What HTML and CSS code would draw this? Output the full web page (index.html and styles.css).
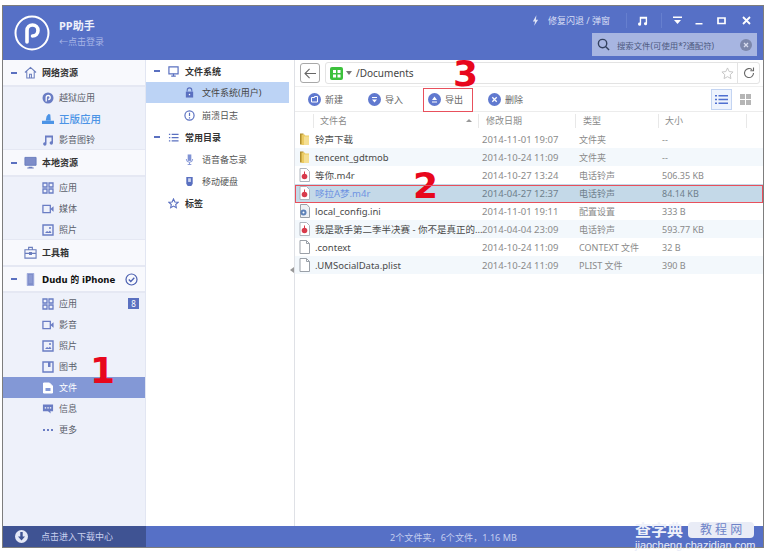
FILE: index.html
```html
<!DOCTYPE html>
<html lang="zh">
<head>
<meta charset="utf-8">
<title>PP助手</title>
<link rel="stylesheet" href="styles.css">
</head>
<body>
<svg class="defs" width="0" height="0" aria-hidden="true">
  <symbol id="apps" viewBox="0 0 12 12"><path d="M1 1h4v4H1zM7 1h4v4H7zM1 7h4v4H1zM7 7h4v4H7z" fill="none" stroke="currentColor" stroke-width="1.3"/></symbol>
  <symbol id="video" viewBox="0 0 13 12"><path d="M1 2h8v8H1z" fill="none" stroke="currentColor" stroke-width="1.4"/><path d="M9 6l3.500-3v6z" fill="currentColor"/></symbol>
  <symbol id="photo" viewBox="0 0 12 12"><path d="M1 1h10v10H1z" fill="none" stroke="currentColor" stroke-width="1.4"/><path d="M3 9l2-2 1.500 1L8 6.500 9.500 9z" fill="currentColor"/><circle cx="8" cy="4" r="1" fill="currentColor"/></symbol>
  <symbol id="book" viewBox="0 0 12 12"><path d="M1 1h10v10H1z" fill="none" stroke="currentColor" stroke-width="1.4"/><path d="M6 1h2.500v5H6z" fill="currentColor"/></symbol>
  <symbol id="doc" viewBox="0 0 12 12"><path d="M1.500 1h6l3 3v7h-9z" fill="#fff" stroke="#fff"/><path d="M3.500 6h5v3h-5z" fill="#8398d6"/></symbol>
  <symbol id="msg" viewBox="0 0 13 12"><path d="M1 1h11v7.500H9L9.500 11 6.500 8.500H1z" fill="currentColor"/><path d="M3 4h1.500v1.500H3zM5.800 4h1.500v1.500H5.800zM8.500 4H10v1.500H8.500z" fill="#fff"/></symbol>
  <symbol id="more" viewBox="0 0 12 12"><path d="M1 5h2v2H1zM5 5h2v2H5zM9 5h2v2H9z" fill="currentColor"/></symbol>
  <symbol id="folder" viewBox="0 0 11 14"><path d="M1 1.500h3.500V12.500H1z" fill="#b08f2c"/><path d="M2.500 2.500h3l.8 1H10v9.500H2.500z" fill="#eccb62"/><path d="M5 4.500h5v8.500H5z" fill="#f5df93"/></symbol>
  <symbol id="audio" viewBox="0 0 11 14"><path d="M1 .5h6.500L10.500 3.500v10H1z" fill="#fff" stroke="#aeb4bd"/><circle cx="5.500" cy="8.500" r="2.800" fill="#d83a4b"/><path d="M5.500 3.500v3" stroke="#d83a4b"/></symbol>
  <symbol id="blank" viewBox="0 0 11 14"><path d="M1 .5h6.500L10.500 3.500v10H1z" fill="#fff" stroke="#9aa0a8"/><path d="M7.500.5v3h3" fill="none" stroke="#9aa0a8"/></symbol>
  <symbol id="config" viewBox="0 0 11 14"><path d="M1.500.5h6.500L10.500 3.500v10h-9z" fill="#eef1f5" stroke="#9aa0a8"/><circle cx="4.500" cy="8.500" r="3" fill="#5e82b8"/><circle cx="4.500" cy="8.500" r="1" fill="#fff"/></symbol>
</svg>

<div class="app">
  <header class="topbar">
    <svg class="logo" viewBox="0 0 36 36"><circle cx="18" cy="18" r="16.500" fill="none" stroke="#fff" stroke-width="2"/><path d="M13 27V15.500a5.500 5.500 0 1 1 5.500 5.500" fill="none" stroke="#fff" stroke-width="3.600" stroke-linecap="round"/></svg>
    <div class="brand">
      <div class="brand-title">PP助手</div>
      <div class="brand-sub">←点击登录</div>
    </div>
    <div class="top-right">
      <div class="win-row">
        <svg class="bolt" viewBox="0 0 8 12"><path d="M5 0L1 7h2.500L2.500 12 7 5H4.500z" fill="#dfe4f6"/></svg>
        <span class="repair">修复闪退 / 弹窗</span>
        <i class="win-sep"></i>
        <svg class="win-music" viewBox="0 0 12 12"><path d="M3 2h8v7.500a1.700 1.700 0 1 1-1.500-1.700V4H4.500v6a1.700 1.700 0 1 1-1.500-1.700z" fill="#fff"/></svg>
        <i class="win-sep"></i>
        <svg class="win-btn" viewBox="0 0 11 11"><path d="M1 1.500h9v1.500H1zM2 5h7L5.500 9z" fill="#fff"/></svg>
        <svg class="win-btn" viewBox="0 0 11 11"><path d="M1.500 8h7v1.500h-7z" fill="#fff"/></svg>
        <svg class="win-btn" viewBox="0 0 11 11"><path d="M2 3h7v5.500H2z" fill="none" stroke="#fff" stroke-width="1.700"/></svg>
        <svg class="win-btn" viewBox="0 0 11 11"><path d="M2 2l7 7M9 2l-7 7" stroke="#fff" stroke-width="1.800"/></svg>
      </div>
      <div class="search">
        <svg class="search-ic" viewBox="0 0 14 14"><circle cx="6" cy="6" r="4.500" fill="none" stroke="#33415f" stroke-width="1.500"/><path d="M9.500 9.500L13 13" stroke="#33415f" stroke-width="1.500"/></svg>
        <span class="search-text">搜索文件(可使用*?通配符)</span>
        <svg class="search-x" viewBox="0 0 12 12"><circle cx="6" cy="6" r="6" fill="#7c87ab"/><path d="M4 4l4 4M8 4l-4 4" stroke="#d7dcee" stroke-width="1.300"/></svg>
      </div>
    </div>
  </header>

  <div class="main">
    <nav class="side">
      <div class="sec">
        <span class="dash"></span>
        <svg class="sec-ic" viewBox="0 0 14 14"><path d="M1 7l6-5.500L13 7M3 6v7h8V6M6 13V9h2v4" fill="none" stroke="#6a7dbd" stroke-width="1.100"/></svg>
        <span class="sec-label">网络资源</span>
      </div>
      <div class="group">
        <div class="item"><svg class="item-ic" viewBox="0 0 12 12"><circle cx="6" cy="6" r="5.500" fill="#6a7dc4"/><path d="M4.200 9.500V5.500a2 2 0 1 1 2 2" fill="none" stroke="#fff" stroke-width="1.300"/></svg><span>越狱应用</span></div>
        <div class="item item-on"><svg class="item-ic" viewBox="0 0 13 12"><path d="M0 8h13v3.500H0zM4 7.500L5 3 7 .5 9 1l.5 6.500z" fill="#4c94e6"/></svg><span>正版应用</span></div>
        <div class="item"><svg class="item-ic" viewBox="0 0 12 12"><path d="M3 1.500h8v7.500a1.700 1.700 0 1 1-1.500-1.700V3.500H4.500V10a1.700 1.700 0 1 1-1.500-1.700z" fill="#6a7dc4"/></svg><span>影音图铃</span></div>
      </div>
      <div class="sec">
        <span class="dash"></span>
        <svg class="sec-ic" viewBox="0 0 14 14"><path d="M1 1.500h12v8.500H1z" fill="#7e8dc9" stroke="#6a7dbd"/><path d="M5 11.500h4v1H5zM3.500 12.500h7v1h-7z" fill="#6a7dbd"/></svg>
        <span class="sec-label">本地资源</span>
      </div>
      <div class="group">
        <div class="item"><svg class="item-ic"><use href="#apps"/></svg><span>应用</span></div>
        <div class="item"><svg class="item-ic"><use href="#video"/></svg><span>媒体</span></div>
        <div class="item"><svg class="item-ic"><use href="#photo"/></svg><span>照片</span></div>
      </div>
      <div class="sec">
        <span class="dash dash-off"></span>
        <svg class="sec-ic" viewBox="0 0 14 14"><path d="M1 4h12v9H1zM5 4V1.500h4V4M1 8h12M6 7h2v2.200H6z" fill="none" stroke="#6a7dbd" stroke-width="1.200"/></svg>
        <span class="sec-label">工具箱</span>
      </div>
      <div class="sec sec-dev">
        <span class="dash"></span>
        <svg class="sec-ic" viewBox="0 0 14 14"><path d="M3.500.5h7v13h-7z" fill="#7e8dc9" stroke="#9aa7da"/><path d="M5 2h4v9H5z" fill="#8d9bd2"/></svg>
        <span class="sec-label sec-dev-name">Dudu 的 iPhone</span>
        <svg class="dev-check" viewBox="0 0 13 13"><circle cx="6.500" cy="6.500" r="5.500" fill="none" stroke="#4a5fb0" stroke-width="1.200"/><path d="M3.800 6.500l2 2 3.500-3.700" fill="none" stroke="#4a5fb0" stroke-width="1.300"/></svg>
      </div>
      <div class="group group-dev">
        <div class="item"><svg class="item-ic"><use href="#apps"/></svg><span>应用</span><b class="count">8</b></div>
        <div class="item"><svg class="item-ic"><use href="#video"/></svg><span>影音</span></div>
        <div class="item"><svg class="item-ic"><use href="#photo"/></svg><span>照片</span></div>
        <div class="item"><svg class="item-ic"><use href="#book"/></svg><span>图书</span></div>
        <div class="item item-sel"><svg class="item-ic"><use href="#doc"/></svg><span>文件</span></div>
        <div class="item"><svg class="item-ic"><use href="#msg"/></svg><span>信息</span></div>
        <div class="item"><svg class="item-ic"><use href="#more"/></svg><span>更多</span></div>
      </div>
    </nav>

    <aside class="tree">
      <div class="t-head"><span class="dash"></span><svg class="t-ic" viewBox="0 0 12 12"><path d="M1 1h10v7.500H1z" fill="none" stroke="#5a70c0" stroke-width="1.300"/><path d="M6 8.500v2M3.500 11h5" stroke="#5a70c0" stroke-width="1.300"/></svg><span>文件系统</span></div>
      <div class="t-row t-sel"><svg class="t-ic" viewBox="0 0 12 12"><path d="M3.500 5V3.500a2.500 2.500 0 0 1 5 0V5" fill="none" stroke="#5a70c0" stroke-width="1.200"/><path d="M2 5h8v6.500H2z" fill="#5a70c0"/><path d="M5.300 7.500h1.400v1.500H5.300z" fill="#fff"/></svg><span>文件系统(用户)</span></div>
      <div class="t-row"><svg class="t-ic" viewBox="0 0 12 12"><circle cx="6" cy="6" r="5" fill="none" stroke="#5a70c0" stroke-width="1.300"/><path d="M6 3v3.500M6 8v1.200" stroke="#5a70c0" stroke-width="1.300"/></svg><span>崩溃日志</span></div>
      <div class="t-head"><span class="dash"></span><svg class="t-ic" viewBox="0 0 12 12"><path d="M1 2h1.500v1.300H1zM4 2h7.500v1.300H4zM1 5.500h1.500v1.300H1zM4 5.500h7.500v1.300H4zM1 9h1.500v1.300H1zM4 9h7.500v1.300H4z" fill="#5a70c0"/></svg><span>常用目录</span></div>
      <div class="t-row"><svg class="t-ic" viewBox="0 0 12 12"><path d="M4 .5h4v7H4z" fill="#7f92d4"/><path d="M2.500 5.500a3.500 3.500 0 0 0 7 0M6 9v2.500M4 11.500h4" fill="none" stroke="#7f92d4"/></svg><span>语音备忘录</span></div>
      <div class="t-row"><svg class="t-ic" viewBox="0 0 12 12"><path d="M2.500 1h7v7.500L8 11H4L2.500 8.500z" fill="#5a70c0"/><path d="M4.500 2.500h3v4h-3z" fill="#cdd5f0"/></svg><span>移动硬盘</span></div>
      <div class="t-head t-tag"><span class="dash dash-off"></span><svg class="t-ic" viewBox="0 0 12 12"><path d="M6 1l1.500 3.300 3.500.4-2.600 2.400.7 3.500L6 8.800l-3.100 1.800.7-3.500L1 4.700l3.500-.4z" fill="none" stroke="#5a70c0" stroke-width="1.200"/></svg><span>标签</span></div>
    </aside>

    <section class="files">
      <div class="addr">
        <div class="back"><svg viewBox="0 0 14 12" class="back-ic"><path d="M6 1L1 6l5 5M1 6h12" fill="none" stroke="#666" stroke-width="1.200"/></svg></div>
        <div class="path">
          <svg class="path-ic" viewBox="0 0 13 13"><rect width="13" height="13" rx="2" fill="#3cc13c"/><path d="M3 3h3v3H3zM7.500 3h3v3h-3zM3 7.500h3v3H3zM7.500 7.500h3v3h-3z" fill="#fff"/></svg>
          <i class="caret"></i>
          <span class="path-text">/Documents</span>
          <svg class="star" viewBox="0 0 14 14"><path d="M7 1l1.800 3.900 4.200.5-3.100 2.900.8 4.200L7 10.400l-3.700 2.100.8-4.200L1 5.400l4.200-.5z" fill="none" stroke="#c4c4c4"/></svg>
          <span class="refresh"><svg viewBox="0 0 12 12" class="refresh-ic"><path d="M10.500 6a4.500 4.500 0 1 1-1.500-3.300" fill="none" stroke="#666" stroke-width="1.100"/><path d="M10.500 .5v3.200H7.300" fill="none" stroke="#666" stroke-width="1.100"/></svg></span>
        </div>
      </div>

      <div class="tools">
        <div class="tool"><svg class="tool-ic" viewBox="0 0 13 13"><circle cx="6.500" cy="6.500" r="6.500" fill="#6079cf"/><path d="M3.500 4.500h3v-1h3v5.500h-6z" fill="none" stroke="#fff"/></svg><span>新建</span></div>
        <div class="tool"><svg class="tool-ic" viewBox="0 0 13 13"><circle cx="6.500" cy="6.500" r="6.500" fill="#6079cf"/><path d="M4 4h5v1H4zM4 6.500h5L6.500 9.500z" fill="#fff"/></svg><span>导入</span></div>
        <div class="tool"><svg class="tool-ic" viewBox="0 0 13 13"><circle cx="6.500" cy="6.500" r="6.500" fill="#6079cf"/><path d="M4 8.500h5v1H4zM4 7h5L6.500 3.500z" fill="#fff"/></svg><span>导出</span></div>
        <div class="tool"><svg class="tool-ic" viewBox="0 0 13 13"><circle cx="6.500" cy="6.500" r="6.500" fill="#6079cf"/><path d="M4.300 4.300l4.400 4.400M8.700 4.300L4.300 8.700" stroke="#fff" stroke-width="1.300"/></svg><span>删除</span></div>
        <div class="views">
          <div class="view view-on"><svg viewBox="0 0 13 11" class="view-ic"><path d="M0 1h2v1.500H0zM3.500 1H13v1.500H3.500zM0 4.700h2v1.500H0zM3.500 4.700H13v1.500H3.500zM0 8.500h2V10H0zM3.500 8.500H13V10H3.500z" fill="#4f6fd0"/></svg></div>
          <div class="view"><svg viewBox="0 0 11 11" class="view-ic"><path d="M0 0h5v5H0zM6 0h5v5H6zM0 6h5v5H0zM6 6h5v5H6z" fill="#b5b5b5"/></svg></div>
        </div>
      </div>

      <div class="cols">
        <span class="col-name">文件名<i class="sort"></i></span>
        <span class="col-date">修改日期</span>
        <span class="col-type">类型</span>
        <span class="col-size">大小</span>
      </div>

      <div class="row"><svg class="f-ic"><use href="#folder"/></svg><span class="f-name">铃声下载</span><span class="f-date">2014-11-01 19:07</span><span class="f-type">文件夹</span><span class="f-size">--</span></div>
      <div class="row"><svg class="f-ic"><use href="#folder"/></svg><span class="f-name">tencent_gdtmob</span><span class="f-date">2014-10-24 11:09</span><span class="f-type">文件夹</span><span class="f-size">--</span></div>
      <div class="row"><svg class="f-ic"><use href="#audio"/></svg><span class="f-name">等你.m4r</span><span class="f-date">2014-10-27 13:24</span><span class="f-type">电话铃声</span><span class="f-size">506.35 KB</span></div>
      <div class="row row-sel"><svg class="f-ic"><use href="#audio"/></svg><span class="f-name">哆拉A梦.m4r</span><span class="f-date">2014-04-27 12:37</span><span class="f-type">电话铃声</span><span class="f-size">84.14 KB</span></div>
      <div class="row"><svg class="f-ic"><use href="#config"/></svg><span class="f-name">local_config.ini</span><span class="f-date">2014-11-01 19:11</span><span class="f-type">配置设置</span><span class="f-size">333 B</span></div>
      <div class="row"><svg class="f-ic"><use href="#audio"/></svg><span class="f-name">我是歌手第二季半决赛 - 你不是真正的...</span><span class="f-date">2014-04-04 23:09</span><span class="f-type">电话铃声</span><span class="f-size">593.77 KB</span></div>
      <div class="row"><svg class="f-ic"><use href="#blank"/></svg><span class="f-name">.context</span><span class="f-date">2014-10-24 11:09</span><span class="f-type">CONTEXT 文件</span><span class="f-size">32 B</span></div>
      <div class="row"><svg class="f-ic"><use href="#blank"/></svg><span class="f-name">.UMSocialData.plist</span><span class="f-date">2014-10-24 11:09</span><span class="f-type">PLIST 文件</span><span class="f-size">390 B</span></div>
    </section>
  </div>

  <footer class="bottom">
    <div class="dl">
      <svg class="dl-ic" viewBox="0 0 13 13"><circle cx="6.500" cy="6.500" r="6.500" fill="#e4e8f6"/><path d="M5.300 2h2.400v4.500H10L6.500 10.500 3 6.500h2.300z" fill="#3f5393"/></svg>
      <span>点击进入下载中心</span>
    </div>
    <div class="status">2个文件夹，6个文件，1.16 MB</div>
  </footer>
</div>

<i class="splitter"></i>
<div class="mark mark-1">1</div>
<div class="mark mark-2">2</div>
<div class="mark mark-3">3</div>
<i class="redbox redbox-row"></i>
<i class="redbox redbox-tool"></i>
<div class="wm">
  <div class="wm-top"><span class="wm-a">查字典</span><span class="wm-b">教 程 网</span></div>
  <div class="wm-url">jiaocheng.chazidian.com</div>
</div>
</body>
</html>
```
FILE: styles.css
```css
* { box-sizing: border-box; }
html, body { margin: 0; padding: 0; background: #fff; }
body {
  width: 766px; height: 552px; overflow: hidden; position: relative;
  font-family: "Noto Sans", "Noto Sans CJK SC", sans-serif;
  font-size: 9px; color: #555;
}
.defs { position: absolute; }
svg { display: block; flex: none; }
i { font-style: normal; }

.app {
  margin: 5px 0 0 2px; width: 762px; height: 543px;
  display: flex; flex-direction: column;
  border: 1px solid #7d7d7d; background: #fff;
}

/* header */
.topbar {
  height: 54px; flex: none; background: #5670c6;
  display: flex; align-items: center; padding-left: 11px; color: #fff;
}
.logo { width: 36px; height: 36px; }
.brand { margin-left: 9px; }
.brand-title { font-size: 11px; line-height: 16px; font-weight: 700; color: #eef1fb; margin-bottom: 1px; }
.brand-sub { font-size: 9px; line-height: 14px; color: #a8b6e6; }
.top-right {
  margin-left: auto; align-self: stretch; width: 231px;
  display: flex; flex-direction: column;
}
.win-row { display: flex; align-items: center; height: 27px; padding-top: 1px; }
.bolt { width: 7px; height: 11px; }
.repair { margin-left: 9px; font-size: 9px; color: #d9dff5; width: 64px; white-space: nowrap; }
.win-sep { width: 1px; height: 15px; background: #667fce; margin-left: 14px; }
.win-music { width: 11px; height: 11px; margin-left: 10px; }
.win-music + .win-sep { margin-left: 13px; }
.win-btn { width: 11px; height: 11px; }
.win-sep + .win-btn { margin-left: 10px; }
.win-btn + .win-btn { margin-left: 11px; }
.win-btn:last-child { margin-left: 14px; }
.search {
  width: 165px; height: 23px; margin-left: 60px;
  background: #a7b5e1; display: flex; align-items: center; padding: 0 5px;
}
.search-ic { width: 13px; height: 13px; }
.search-text { margin-left: 7px; color: #4d5a80; font-size: 8.400px; white-space: nowrap; }
.search-x { width: 12px; height: 12px; margin-left: auto; }

/* columns */
.main { flex: 1; display: flex; min-height: 0; }

.side { width: 143px; flex: none; background: #eef1fa; border-right: 1px solid #e2e6f2; }
.sec {
  height: 27px; display: flex; align-items: center; padding-left: 8px;
  background: #f8f9fd; border-bottom: 2px solid #e5e8f3;
  color: #333; font-size: 9px; font-weight: 700;
}
.sec-dev { height: 26px; }
.dash { width: 6px; height: 2px; background: #5a70c0; flex: none; }
.dash-off { background: transparent; }
.sec-ic { width: 13px; height: 13px; margin-left: 7px; }
.sec-label { margin-left: 5px; white-space: nowrap; }
.sec-dev-name { font-family: "DejaVu Sans", "Noto Sans CJK SC", sans-serif; font-size: 8.600px; color: #111; }
.dev-check { width: 13px; height: 13px; margin-left: auto; margin-right: 7px; }
.group { box-shadow: inset 0 -1px 0 #e5e8f3; }
.group-dev { box-shadow: none; }
.item {
  height: 21px; display: flex; align-items: center; padding-left: 39px;
  font-size: 9px; color: #5b5f6b;
}
.item-ic { width: 12px; height: 12px; color: #6a7dc4; }
.item span { margin-left: 5px; }
.item-on { color: #4c94e6; font-size: 10.500px; font-weight: 500; }
.item-sel { background: #8398d6; color: #fff; }
.count {
  margin-left: auto; margin-right: 6px; width: 11px; height: 11px;
  background: #5a70c0; color: #fff; font-size: 8px; font-weight: 400;
  display: flex; align-items: center; justify-content: center;
}

.tree { width: 149px; flex: none; border-right: 1px solid #dfe1e6; padding-right: 5px; }
.t-head, .t-row { height: 22px; display: flex; align-items: center; white-space: nowrap; }
.t-head { padding-left: 8px; color: #333; font-weight: 700; font-size: 9px; }
.t-head .t-ic { margin-left: 8px; }
.t-head span:last-child { margin-left: 6px; }
.t-row { padding-left: 38px; color: #555; }
.t-ic { width: 11px; height: 11px; }
.t-row span { margin-left: 7px; }
.t-sel { background: #bcd3f5; color: #444; height: 21px; margin-bottom: 1px; }

/* file pane */
.files { flex: 1; min-width: 0; padding-top: 2px; font-size: 9.500px; }
.addr { display: flex; align-items: center; padding: 0 3px 0 5px; height: 22px; }
.back {
  width: 20px; height: 20px; border: 1px solid #a8a8a8; border-radius: 3px;
  display: flex; align-items: center; justify-content: center;
}
.back-ic { width: 13px; height: 11px; }
.path {
  flex: 1; height: 22px; margin-left: 5px; border: 1px solid #e3e3e3; border-radius: 3px;
  display: flex; align-items: center; padding-left: 4px;
}
.path-ic { width: 13px; height: 13px; }
.caret { width: 0; height: 0; border: 3px solid transparent; border-top: 4px solid #777; border-bottom: 0; margin-left: 3px; }
.path-text { margin-left: 4px; color: #444; font-size: 10px; }
.star { width: 13px; height: 13px; margin-left: auto; }
.refresh {
  width: 22px; height: 20px; margin-left: 3px; border-left: 1px solid #e3e3e3;
  display: flex; align-items: center; justify-content: center;
}
.refresh-ic { width: 12px; height: 12px; }

.tools {
  height: 26px; display: flex; align-items: center; padding-left: 13px;
  border-top: 1px solid #f0f0f0; border-bottom: 1px solid #ececec; margin-top: 2px;
}
.tool { width: 60px; display: flex; align-items: center; color: #666; font-size: 9px; }
.tool-ic { width: 13px; height: 13px; }
.tool span { margin-left: 4px; }
.views { margin-left: auto; display: flex; align-items: center; }
.view { width: 21px; height: 21px; display: flex; align-items: center; justify-content: center; margin-right: 3px; }
.view-on { background: #eef3fd; border: 1px solid #c3d4f2; }
.view + .view { margin-right: 7px; }
.view-ic { width: 13px; height: 11px; }
.view + .view .view-ic { width: 11px; height: 11px; }

.cols {
  height: 14px; display: flex; align-items: center; color: #8a8a8a; font-size: 9px;
  margin: 2px 0;
}
.cols span { display: block; height: 14px; line-height: 14px; border-left: 1px solid #e8e8e8; padding-left: 6px; white-space: nowrap; }
.col-name { width: 165px; margin-left: 18px; position: relative; }
.cols .col-date { width: 97px; padding-left: 7px; }
.cols .col-type { width: 83px; padding-left: 7px; }
.col-size { width: 89px; border-right: 1px solid #e8e8e8; }
.sort { position: absolute; right: 6px; top: 5px; width: 0; height: 0; border: 3px solid transparent; border-bottom: 3px solid #999; border-top: 0; }

.row { height: 18px; display: flex; align-items: center; padding-left: 4px; color: #8a8a8a; white-space: nowrap; }
.row:nth-of-type(odd) { background: #f3f8fc; }
.f-ic { width: 11px; height: 14px; }
.f-name { width: 172px; padding-left: 5px; color: #4a4a4a; overflow: hidden; font-size: 9.500px; }
.f-date { width: 97px; }
.f-type { width: 83px; font-size: 9px; }
.f-size { font-size: 9px; }
.row-sel, .row-sel:nth-of-type(odd) { background: #c4d9e8; }
.row-sel .f-name { color: #6e93e2; }
.row-sel .f-date, .row-sel .f-type, .row-sel .f-size { color: #6f7f8c; }

.bottom { height: 21px; flex: none; display: flex; align-items: center; background: #5670c6; }
.dl {
  width: 143px; height: 21px; background: #3f5393; color: #c8d0ee;
  display: flex; align-items: center; padding-left: 12px;
}
.dl-ic { width: 13px; height: 13px; }
.dl span { margin-left: 13px; }
.status { margin-left: 244px; color: #c4ceef; font-size: 9.100px; }

/* overlays on top of the screenshot */
.splitter {
  position: absolute; left: 290px; top: 267px; width: 0; height: 0;
  border: 3px solid transparent; border-right: 4px solid #999; border-left: 0;
}
.mark {
  position: absolute; color: #e8071c; font-family: "DejaVu Sans", sans-serif;
  font-weight: 700; font-size: 36px; line-height: 36px;
}
.mark-1 { left: 90px; top: 353px; }
.mark-2 { left: 413px; top: 168px; }
.mark-3 { left: 453px; top: 56px; }
.redbox { position: absolute; border: 1px solid #e8505c; }
.redbox-row { left: 295px; top: 185px; width: 468px; height: 18px; }
.redbox-tool { left: 423px; top: 88px; width: 50px; height: 24px; }
.wm { position: absolute; left: 635px; top: 521px; width: 130px; color: #eef1fa; }
.wm-top { display: flex; align-items: center; height: 18px; }
.wm-a { font-size: 16px; font-weight: 700; line-height: 18px; white-space: nowrap; }
.wm-b {
  margin-left: 5px; width: 66px; text-align: center; background: #e9ecf6; color: #6f84c8;
  font-size: 12px; line-height: 16px; border-radius: 4px; white-space: nowrap;
}
.wm-url { margin-top: 1px; font-family: "Liberation Sans", sans-serif; font-size: 11px; line-height: 10px; color: #e8ecf8; white-space: nowrap; }
```
